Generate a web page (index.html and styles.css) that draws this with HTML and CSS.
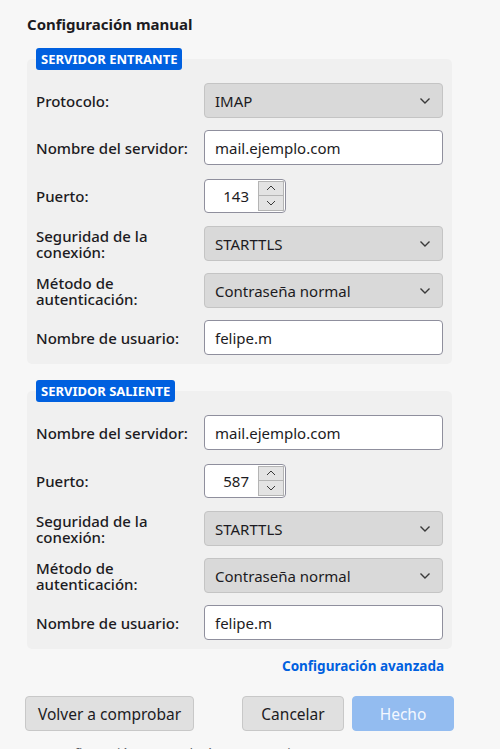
FILE: index.html
```html
<!DOCTYPE html>
<html lang="es">
<head>
<meta charset="utf-8">
<link rel="stylesheet" href="styles.css">
</head>
<body>
<div class="page">
  <h1 class="title">Configuración manual</h1>

  <section class="group">
    <div class="badge">SERVIDOR ENTRANTE</div>
    <div class="panel">
      <label class="lbl">Protocolo:</label>
      <div class="select"><span>IMAP</span><svg class="chev" width="12" height="8" viewBox="0 0 12 8"><path d="M1.5 1.5 6 6l4.5-4.5" fill="none" stroke="#3a3a3a" stroke-width="1.4"/></svg></div>

      <label class="lbl">Nombre del servidor:</label>
      <div class="input">mail.ejemplo.com</div>

      <label class="lbl lbl-port">Puerto:</label>
      <div class="port-row">
        <div class="port"><span class="port-val">143</span><div class="spin"><span class="spin-btn"><svg width="10" height="6" viewBox="0 0 10 6"><path d="M1 5 5 1l4 4" fill="none" stroke="#3a3a3a" stroke-width="1"/></svg></span><span class="spin-btn"><svg width="10" height="6" viewBox="0 0 10 6"><path d="M1 1l4 4 4-4" fill="none" stroke="#3a3a3a" stroke-width="1"/></svg></span></div></div>
      </div>

      <label class="lbl">Seguridad de la conexión:</label>
      <div class="select"><span>STARTTLS</span><svg class="chev" width="12" height="8" viewBox="0 0 12 8"><path d="M1.5 1.5 6 6l4.5-4.5" fill="none" stroke="#3a3a3a" stroke-width="1.4"/></svg></div>

      <label class="lbl">Método de autenticación:</label>
      <div class="select"><span>Contraseña normal</span><svg class="chev" width="12" height="8" viewBox="0 0 12 8"><path d="M1.5 1.5 6 6l4.5-4.5" fill="none" stroke="#3a3a3a" stroke-width="1.4"/></svg></div>

      <label class="lbl">Nombre de usuario:</label>
      <div class="input">felipe.m</div>
    </div>
  </section>

  <section class="group group-out">
    <div class="badge">SERVIDOR SALIENTE</div>
    <div class="panel">
      <label class="lbl">Nombre del servidor:</label>
      <div class="input">mail.ejemplo.com</div>

      <label class="lbl lbl-port">Puerto:</label>
      <div class="port-row">
        <div class="port"><span class="port-val">587</span><div class="spin"><span class="spin-btn"><svg width="10" height="6" viewBox="0 0 10 6"><path d="M1 5 5 1l4 4" fill="none" stroke="#3a3a3a" stroke-width="1"/></svg></span><span class="spin-btn"><svg width="10" height="6" viewBox="0 0 10 6"><path d="M1 1l4 4 4-4" fill="none" stroke="#3a3a3a" stroke-width="1"/></svg></span></div></div>
      </div>

      <label class="lbl">Seguridad de la conexión:</label>
      <div class="select"><span>STARTTLS</span><svg class="chev" width="12" height="8" viewBox="0 0 12 8"><path d="M1.5 1.5 6 6l4.5-4.5" fill="none" stroke="#3a3a3a" stroke-width="1.4"/></svg></div>

      <label class="lbl">Método de autenticación:</label>
      <div class="select"><span>Contraseña normal</span><svg class="chev" width="12" height="8" viewBox="0 0 12 8"><path d="M1.5 1.5 6 6l4.5-4.5" fill="none" stroke="#3a3a3a" stroke-width="1.4"/></svg></div>

      <label class="lbl">Nombre de usuario:</label>
      <div class="input">felipe.m</div>
    </div>
  </section>

  <div class="adv-row"><a class="adv">Configuración avanzada</a></div>

  <div class="buttons">
    <button class="btn btn-check">Volver a comprobar</button>
    <div class="buttons-right">
      <button class="btn btn-cancel">Cancelar</button>
      <button class="btn btn-done">Hecho</button>
    </div>
  </div>

  <p class="note">La configuración se guardará en este equipo.</p>
</div>
</body>
</html>
```

FILE: styles.css
```css
* { box-sizing: border-box; }
html, body { margin: 0; padding: 0; }
body {
  background: #f7f7f7;
  font-family: "Noto Sans", "Open Sans", sans-serif;
  color: #1c1b22;
  width: 500px;
  height: 749px;
  overflow: hidden;
}
.page {
  padding: 12px 48px 0 27px;
}
.title {
  margin: 0;
  font-size: 15px;
  font-weight: 700;
  line-height: 24px;
  height: 24px;
}
.group {
  margin-top: 12px;
}
.group-out {
  margin-top: 16px;
}
.badge {
  position: relative;
  z-index: 1;
  display: block;
  width: max-content;
  margin-left: 9px;
  height: 22px;
  padding: 0 5px;
  background: #0060df;
  color: #fff;
  font-size: 13px;
  font-weight: 700;
  line-height: 22px;
  border-radius: 3px;
}
.panel {
  margin-top: -11px;
  background: #f0f0f0;
  border-radius: 5px;
  padding: 24px 9px 9px 9px;
  display: grid;
  grid-template-columns: 168px 1fr;
  row-gap: 12px;
  align-items: center;
}
.lbl {
  font-size: 15px;
  font-weight: 500;
  line-height: 16px;
  padding-right: 4px;
}
.select, .input {
  height: 35px;
  border-radius: 4px;
  font-size: 15px;
  display: flex;
  align-items: center;
  padding: 0 10px;
}
.select {
  background: #d9d9d9;
  border: 1px solid #c4c4c4;
  justify-content: space-between;
}
.chev { margin-right: 1px; }
.input {
  background: #fff;
  border: 1px solid #8f8f9d;
}
.port-row {
  height: 37px;
  display: flex;
  align-items: center;
}
.port {
  width: 82px;
  height: 34px;
  background: #fff;
  border: 1px solid #8f8f9d;
  border-radius: 4px;
  display: flex;
  align-items: stretch;
}
.port-val {
  flex: 1;
  font-size: 15px;
  display: flex;
  align-items: center;
  justify-content: flex-end;
  padding-right: 9px;
}
.spin {
  width: 27px;
  display: flex;
  flex-direction: column;
  padding: 1px 1px 1px 0;
}
.spin-btn {
  flex: 1;
  background: #e3e3e3;
  border: 1px solid #b4b4b4;
  display: flex;
  align-items: center;
  justify-content: center;
}
.spin-btn + .spin-btn { border-top: none; }
.adv-row {
  display: flex;
  justify-content: flex-end;
  padding-right: 8px;
  margin-top: 7px;
  height: 20px;
}
.adv {
  color: #0060df;
  font-size: 13.5px;
  font-weight: 700;
  line-height: 20px;
}
.buttons {
  margin-top: 20px;
  margin-left: -2px;
  margin-right: -2px;
  display: flex;
  justify-content: space-between;
}
.buttons-right {
  display: flex;
  gap: 8px;
}
.btn {
  height: 35px;
  border-radius: 4px;
  font-family: inherit;
  font-size: 15.5px;
  color: #1c1b22;
  background: #e0e0e0;
  border: 1px solid #c8c8c8;
  padding: 0 8px;
  white-space: nowrap;
}
.btn-check { width: 169px; }
.btn-cancel { width: 102px; }
.btn-done {
  width: 102px;
  background: #93bcf0;
  border-color: #93bcf0;
  color: #f4f8ff;
}
.note {
  margin: 13px 0 0 8px;
  font-size: 13px;
  color: #5b5b66;
  line-height: 18px;
}
```
